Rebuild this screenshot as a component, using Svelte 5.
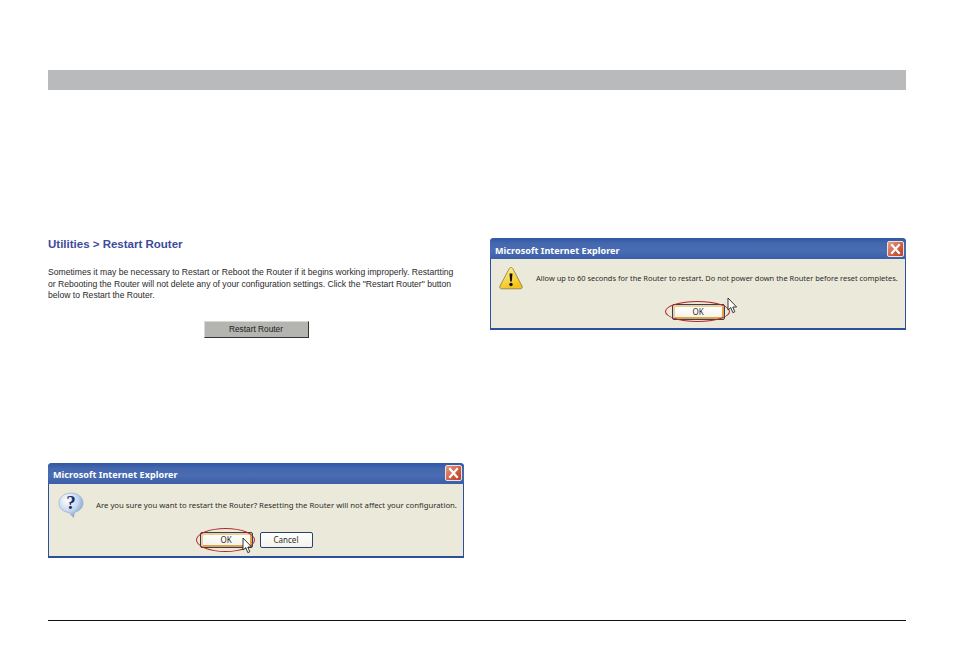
<script>
    const leftText = "Are you sure you want to restart the Router? Resetting the Router will not affect your configuration.";
    const rightText = "Allow up to 60 seconds for the Router to restart. Do not power down the Router before reset completes.";
</script>

{#snippet cursor(cls)}
    <svg class="cursor {cls}" width="11" height="17" viewBox="0 0 11 17">
        <path d="M1 1 L1 13 L3.8 10.6 L5.8 15.6 L7.8 14.8 L5.8 10 L9.6 10 Z" fill="#fff" stroke="#222" stroke-width="0.9" stroke-linejoin="round"/>
    </svg>
{/snippet}

{#snippet titlebar()}
    <div class="titlebar">
        <span class="title">Microsoft Internet Explorer</span>
        <span class="close">
            <svg width="15" height="14" viewBox="0 0 15 14">
                <path d="M4 3 L11 11 M11 3 L4 11" stroke="#fff" stroke-width="2.2" stroke-linecap="square"/>
            </svg>
        </span>
    </div>
{/snippet}

<div class="page">
    <div class="topbar"></div>

    <div class="columns">
        <div class="col">
            <h3>Utilities &gt; Restart Router</h3>
            <p class="copy">
                Sometimes it may be necessary to Restart or Reboot the Router if it begins working improperly. Restartting<br>
                or Rebooting the Router will not delete any of your configuration settings. Click the "Restart Router" button<br>
                below to Restart the Router.
            </p>
            <div class="restart-row"><div class="restart">Restart Router</div></div>

            <div class="dialog left">
                {@render titlebar()}
                <div class="body">
                    <svg class="icon" width="26" height="26" viewBox="0 0 26 26">
                        <defs>
                            <radialGradient id="q" cx="0.35" cy="0.3" r="0.8">
                                <stop offset="0" stop-color="#fff"/>
                                <stop offset="0.55" stop-color="#c6d8ee"/>
                                <stop offset="1" stop-color="#6d94c6"/>
                            </radialGradient>
                        </defs>
                        <path d="M13 1 C20 1 25 5.500 25 11 C25 16 21 19.500 16.500 20.300 L15.500 25.500 L11 20.600 C5.500 20 1 16.500 1 11 C1 5.500 6 1 13 1 Z" fill="url(#q)" stroke="#8ba6c8" stroke-width="0.6"/>
                        <text x="13" y="17" text-anchor="middle" class="qmark">?</text>
                    </svg>
                    <span class="msg">{leftText}</span>
                </div>
                <div class="actions">
                    <div class="btn default">
                        OK
                        <span class="ring"></span>
                        {@render cursor("cursor-left")}
                    </div>
                    <div class="btn">Cancel</div>
                </div>
            </div>
        </div>

        <div class="col">
            <div class="dialog right">
                {@render titlebar()}
                <div class="body">
                    <svg class="icon" width="24" height="24" viewBox="0 0 24 24">
                        <defs>
                            <linearGradient id="w" x1="0" y1="0" x2="0.4" y2="1">
                                <stop offset="0" stop-color="#fff3a0"/>
                                <stop offset="1" stop-color="#f0c419"/>
                            </linearGradient>
                        </defs>
                        <path d="M12 1.500 C13 1.500 13.500 2.200 14 3 L23 20 C23.600 21.500 23 22.800 21.500 22.800 L2.500 22.800 C1 22.800 0.400 21.500 1 20 L10 3 C10.500 2.200 11 1.500 12 1.500 Z" fill="url(#w)" stroke="#7a6a3a" stroke-width="0.7"/>
                        <path d="M10.500 7.500 L13.500 7.500 L12.800 15.500 L11.200 15.500 Z" fill="#111"/>
                        <circle cx="12" cy="18.500" r="1.700" fill="#111"/>
                    </svg>
                    <span class="msg">{rightText}</span>
                </div>
                <div class="actions">
                    <div class="btn default">
                        OK
                        <span class="ring"></span>
                        {@render cursor("cursor-right")}
                    </div>
                </div>
            </div>
        </div>
    </div>

    <div class="rule"></div>
</div>

<style>
    :global(body) {
        background: #fff;
    }
    .page {
        width: 954px;
        height: 668px;
        box-sizing: border-box;
        padding: 70px 48px 0;
        font-family: "Liberation Sans", Arial, sans-serif;
        color: #222;
        overflow: hidden;
    }
    .topbar {
        height: 20px;
        background: #b9babc;
    }
    .columns {
        display: grid;
        grid-template-columns: 416px 416px;
        column-gap: 26px;
        height: 382px;
        padding-top: 148px;
        box-sizing: content-box;
    }
    h3 {
        margin: 0;
        font-size: 11.5px;
        line-height: 13px;
        font-weight: bold;
        color: #3c4b9c;
    }
    .copy {
        margin: 16px 0 0;
        font-size: 8.6px;
        line-height: 11.5px;
        color: #2a2a2a;
        white-space: nowrap;
    }
    .restart-row {
        display: flex;
        justify-content: center;
        margin-top: 19px;
    }
    .restart {
        width: 105px;
        height: 17px;
        box-sizing: border-box;
        background: #b4b4b0;
        border: 1px solid;
        border-color: #d8d8d8 #333 #333 #d8d8d8;
        font-size: 8.3px;
        line-height: 15px;
        text-align: center;
        color: #222;
    }
    .dialog {
        display: flex;
        flex-direction: column;
        box-sizing: border-box;
        background: #ebe9d9;
        border: 1px solid #2d4f9e;
        border-bottom-width: 2px;
        border-top: none;
        border-radius: 4px 4px 0 0;
    }
    .dialog.left {
        margin-top: 125px;
        height: 95px;
    }
    .dialog.right {
        height: 92px;
    }
    .titlebar {
        height: 21px;
        margin: 0 -1px;
        display: flex;
        align-items: center;
        justify-content: space-between;
        padding: 0 2px 0 5px;
        background: linear-gradient(#2f57a6, #4467ae 25%, #4a6cb2 60%, #3a5ea8);
        border-radius: 4px 4px 0 0;
    }
    .title {
        margin-top: 3px;
        font-family: "Noto Sans", sans-serif;
        font-size: 9px;
        font-weight: bold;
        letter-spacing: 0.07px;
        color: #fff;
    }
    .close {
        width: 15px;
        height: 14px;
        display: flex;
        background: linear-gradient(135deg, #e5a08a, #cf5a3c 60%, #b8432a);
        border: 1px solid #e8e4dc;
        border-radius: 2px;
    }
    .body {
        display: flex;
        align-items: center;
        box-sizing: border-box;
    }
    .left .body {
        padding: 0 0 6px 9px;
        height: 48px;
    }
    .right .body {
        padding: 0 0 7px 8px;
        height: 45px;
    }
    .icon {
        flex: none;
    }
    .msg {
        font-family: "Noto Sans", sans-serif;
        white-space: nowrap;
        color: #2c2c2c;
    }
    .left .msg {
        margin-left: 12px;
        font-size: 7.75px;
    }
    .right .msg {
        margin-left: 13px;
        font-size: 7.45px;
    }
    .qmark {
        font-family: "Liberation Serif", serif;
        font-size: 19px;
        font-weight: bold;
        fill: #1c2f6c;
    }
    .actions {
        display: flex;
        justify-content: center;
        gap: 7px;
    }
    .btn {
        position: relative;
        width: 53px;
        height: 16px;
        box-sizing: border-box;
        background: linear-gradient(#fff, #f3f2ea);
        border: 1px solid #2c3f70;
        border-radius: 2px;
        font-family: "Noto Sans", sans-serif;
        font-size: 8px;
        line-height: 14px;
        text-align: center;
        color: #2c2c2c;
    }
    .btn.default {
        box-shadow: inset 2px 2px 0 #f0cf8a, inset -2px -2px 0 #e2a33c;
    }
    .ring {
        position: absolute;
        box-sizing: border-box;
        border: 1.5px solid #b5232b;
        border-radius: 50%;
    }
    .left .ring {
        left: -5px;
        top: -5px;
        width: 59px;
        height: 24px;
    }
    .right .ring {
        left: -8px;
        top: -4px;
        width: 65px;
        height: 21px;
    }
    .cursor {
        position: absolute;
    }
    .cursor-left {
        left: 41px;
        top: 4px;
    }
    .cursor-right {
        left: 54px;
        top: -8px;
    }
    .rule {
        height: 1px;
        background: #111;
    }
</style>
